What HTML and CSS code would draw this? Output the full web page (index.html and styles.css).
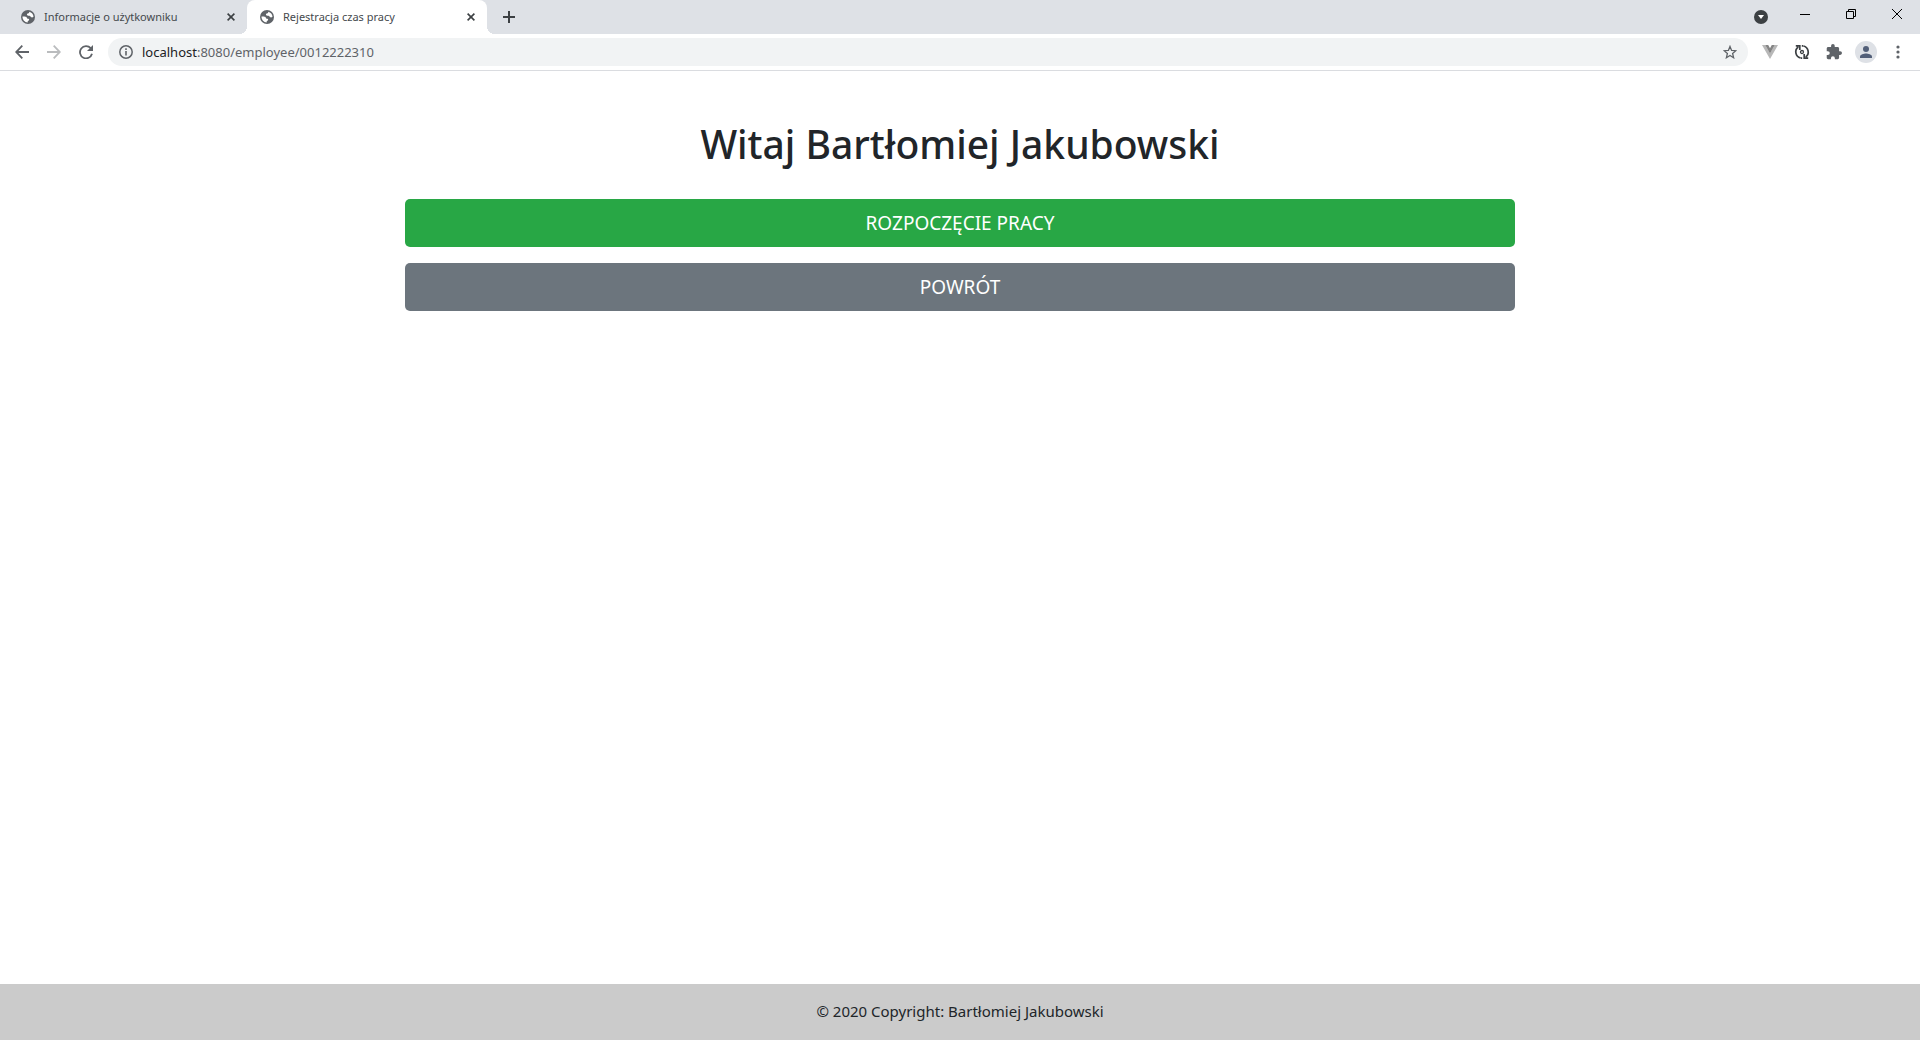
FILE: index.html
```html
<!DOCTYPE html>
<html lang="pl">
<head>
<meta charset="utf-8">
<meta name="viewport" content="width=device-width, initial-scale=1">
<title>Rejestracja czas pracy</title>
<link rel="stylesheet" href="styles.css">
</head>
<body>
<svg class="defs" aria-hidden="true">
  <symbol id="globe" viewBox="0 0 14 14">
    <circle cx="7" cy="7" r="7" fill="#5f6368"/>
    <path d="M1.500 6.600c1.500-.2 3.300-.1 4.100.6.5.6.3 1.300 1.200 1.500 1 .1 1.500.4 1.300 1.200-.3.8-1.200.8-1.400 1.500v1.100C3.800 12.400 1.400 9.900 1.500 6.600zM8.300 1.700c2.300.5 4.100 2.400 4.200 5-.8.7-1.700.9-2.500.4-.7-.5-.5-1.200-1.500-1.400-1.500-.1-2.700-.4-2.600-1.300.1-.8 1.700-.7 2.100-1.300.2-.4.200-.9.300-1.400z" fill="#fff"/>
  </symbol>
  <symbol id="cross" viewBox="0 0 8 8">
    <path d="M.6.6l6.800 6.800M7.400.6L.6 7.400" stroke="#3c4043" stroke-width="1.600" fill="none"/>
  </symbol>
</svg>

<header class="browser">
  <div class="tab-strip">
    <div class="tabs">
      <div class="tab">
        <svg class="icon-14"><use href="#globe"/></svg>
        <span class="tab-title">Informacje o użytkowniku</span>
        <button class="tab-close" aria-label="Zamknij kartę"><svg class="icon-8"><use href="#cross"/></svg></button>
      </div>
      <div class="tab tab-active">
        <svg class="icon-14"><use href="#globe"/></svg>
        <span class="tab-title">Rejestracja czas pracy</span>
        <button class="tab-close" aria-label="Zamknij kartę"><svg class="icon-8"><use href="#cross"/></svg></button>
      </div>
      <button class="new-tab" aria-label="Nowa karta">
        <svg width="12" height="12" viewBox="0 0 12 12"><path d="M6 0v12M0 6h12" stroke="#3c4043" stroke-width="2"/></svg>
      </button>
    </div>
    <div class="window-controls">
      <button class="tab-search" aria-label="Szukaj kart">
        <svg width="14" height="14" viewBox="0 0 14 14"><circle cx="7" cy="7" r="7" fill="#3c4043"/><path d="M4 5h6L7 9z" fill="#fff"/></svg>
      </button>
      <button class="window-button" aria-label="Minimalizuj">
        <svg width="10" height="10" viewBox="0 0 10 10"><path d="M0 5.500h10" stroke="#000"/></svg>
      </button>
      <button class="window-button" aria-label="Przywróć">
        <svg width="10" height="10" viewBox="0 0 10 10" fill="none" stroke="#000"><path d="M.5 2.500h7v7h-7zM2.500 2.500v-2h7v7h-2"/></svg>
      </button>
      <button class="window-button" aria-label="Zamknij">
        <svg width="10" height="10" viewBox="0 0 10 10"><path d="M0 0l10 10M10 0L0 10" stroke="#000"/></svg>
      </button>
    </div>
  </div>

  <div class="toolbar">
    <button class="tool" aria-label="Wstecz">
      <svg width="14" height="14" viewBox="0 0 14 14" fill="none" stroke="#5f6368" stroke-width="1.800"><path d="M14 7H1.500M7.300.7L1.200 7l6.100 6.300"/></svg>
    </button>
    <button class="tool" aria-label="Dalej">
      <svg width="14" height="14" viewBox="0 0 14 14" fill="none" stroke="#babcbe" stroke-width="1.800"><path d="M0 7h12.500M6.700.7L12.800 7l-6.100 6.300"/></svg>
    </button>
    <button class="tool" aria-label="Odśwież">
      <svg width="14" height="14" viewBox="0 0 14 14"><path d="M11.700 3.200A6.100 6.100 0 1 0 13 8.800" fill="none" stroke="#5f6368" stroke-width="1.800"/><path d="M14 0v6H8z" fill="#5f6368"/></svg>
    </button>
    <div class="address-bar">
      <svg width="14" height="14" viewBox="0 0 14 14"><circle cx="7" cy="7" r="6.200" fill="none" stroke="#5f6368" stroke-width="1.500"/><path d="M7 6v4.500M7 3.300v1.600" stroke="#5f6368" stroke-width="1.600"/></svg>
      <span class="url"><span class="url-host">localhost</span>:8080/employee/0012222310</span>
      <button class="bookmark" aria-label="Dodaj do zakładek">
        <svg width="14" height="14" viewBox="0 0 14 14"><path d="M7 1.400l1.600 4 4.300.3-3.300 2.800 1 4.200L7 10.400l-3.600 2.300 1-4.200L1.100 5.700l4.300-.3z" fill="none" stroke="#5f6368" stroke-width="1.300"/></svg>
      </button>
    </div>
    <button class="extension" aria-label="Vue.js devtools">
      <svg width="16" height="14" viewBox="0 0 16 14"><path d="M0 0h3.200L8 8.300 12.800 0H16L8 14z" fill="#b8b8b8"/><path d="M3.200 0h3L8 3.200 9.800 0h3L8 8.500z" fill="#858585"/></svg>
    </button>
    <button class="extension" aria-label="Synchronizacja">
      <svg width="16" height="16" viewBox="0 0 16 16" fill="none" stroke="#3c4043" stroke-width="1.700"><path d="M6.500 14A6.200 6.200 0 0 1 4.300 3M1.800 1.900h4v4M9.500 2a6.200 6.200 0 0 1 2.200 11M14.200 14.100h-4v-4M7.800 1.900h1.400M6.800 14.100h1.400"/><circle cx="8" cy="8" r="1.500" stroke-width="1.300"/></svg>
    </button>
    <button class="extension" aria-label="Rozszerzenia">
      <svg width="16" height="16" viewBox="1 1 22 22"><path d="M20.500 11H19V7c0-1.100-.9-2-2-2h-4V3.500a2.500 2.500 0 0 0-5 0V5H4c-1.100 0-2 .9-2 2v3.800h1.500a2.700 2.700 0 0 1 0 5.400H2V20c0 1.100.9 2 2 2h3.800v-1.500a2.700 2.700 0 0 1 5.400 0V22H17c1.100 0 2-.9 2-2v-4h1.500a2.500 2.500 0 0 0 0-5z" fill="#5f6368"/></svg>
    </button>
    <button class="extension" aria-label="Profil">
      <svg width="22" height="22" viewBox="0 0 22 22"><circle cx="11" cy="11" r="11" fill="#dee1e6"/><circle cx="11" cy="8" r="3" fill="#525f78"/><path d="M5 17v-1.500c0-2 4-3 6-3s6 1 6 3V17z" fill="#525f78"/></svg>
    </button>
    <button class="extension" aria-label="Menu">
      <svg width="4" height="14" viewBox="0 0 4 14" fill="#5f6368"><circle cx="2" cy="2" r="1.600"/><circle cx="2" cy="7" r="1.600"/><circle cx="2" cy="12" r="1.600"/></svg>
    </button>
  </div>
</header>

<main class="container">
  <h1 class="greeting">Witaj Bartłomiej Jakubowski</h1>
  <button class="btn btn-success">ROZPOCZĘCIE PRACY</button>
  <button class="btn btn-secondary">POWRÓT</button>
</main>

<footer class="footer">© 2020 Copyright: Bartłomiej Jakubowski</footer>
</body>
</html>
```
FILE: styles.css
```css
* {
  box-sizing: border-box;
}

body {
  display: flex;
  flex-direction: column;
  min-height: 100vh;
  margin: 0;
  background: #fff;
  color: #212529;
  font-family: "Noto Sans", "Open Sans", sans-serif;
  font-size: 15px;
}

button {
  margin: 0;
  padding: 0;
  border: 0;
  background: none;
  font: inherit;
}

svg {
  display: block;
  flex: none;
}

.defs {
  position: absolute;
  width: 0;
  height: 0;
}

.icon-14 {
  width: 14px;
  height: 14px;
}

.icon-8 {
  width: 8px;
  height: 8px;
}

/* Browser window */

.tab-strip {
  display: flex;
  justify-content: space-between;
  height: 34px;
  background: #dee1e6;
}

.tabs {
  display: flex;
  padding-left: 8px;
}

.tab {
  position: relative;
  display: flex;
  align-items: center;
  gap: 9px;
  width: 239px;
  padding: 0 12px 0 13px;
  color: #45494d;
  font-size: 11px;
}

.tab-active {
  width: 240px;
  border-radius: 8px 8px 0 0;
  background: #fff;
}

.tab-active::before,
.tab-active::after {
  content: "";
  position: absolute;
  bottom: 0;
  width: 8px;
  height: 8px;
}

.tab-active::before {
  right: 100%;
  background: radial-gradient(circle at 0 0, #dee1e6 8px, #fff 8px);
}

.tab-active::after {
  left: 100%;
  background: radial-gradient(circle at 100% 0, #dee1e6 8px, #fff 8px);
}

.tab-title {
  flex: 1;
  padding-bottom: 2px;
  white-space: nowrap;
}

.tab-close,
.new-tab,
.tool,
.extension,
.bookmark,
.tab-search,
.window-button {
  display: flex;
  align-items: center;
  justify-content: center;
}

.new-tab {
  width: 44px;
}

.window-controls {
  display: flex;
}

.tab-search {
  width: 42px;
}

.window-button {
  width: 46px;
  height: 28px;
}

.toolbar {
  display: flex;
  align-items: center;
  height: 37px;
  padding: 0 6px;
  border-bottom: 1px solid #dadce0;
}

.tool {
  width: 32px;
  height: 28px;
}

.address-bar {
  display: flex;
  flex: 1;
  align-items: center;
  gap: 9px;
  height: 28px;
  margin: 0 6px;
  padding: 0 11px;
  border-radius: 14px;
  background: #f1f3f4;
  color: #5f6368;
  font-size: 13px;
}

.url {
  flex: 1;
}

.url-host {
  color: #202124;
}

.extension {
  width: 32px;
  height: 28px;
}

/* Page */

.container {
  display: flex;
  flex: 1;
  flex-direction: column;
  gap: 16px;
  width: 100%;
  max-width: 1140px;
  margin: 0 auto;
  padding: 48px 15px;
}

.greeting {
  margin: 0 0 14px;
  font-size: 39px;
  font-weight: 500;
  line-height: 50px;
  text-align: center;
}

.btn {
  height: 48px;
  border-radius: 5px;
  color: #fff;
  font-size: 19px;
}

.btn-success {
  background: #28a745;
}

.btn-secondary {
  background: #6c757d;
}

.footer {
  padding: 15px 16px 17px;
  background: #cbcbcb;
  line-height: 24px;
  text-align: center;
}
```
